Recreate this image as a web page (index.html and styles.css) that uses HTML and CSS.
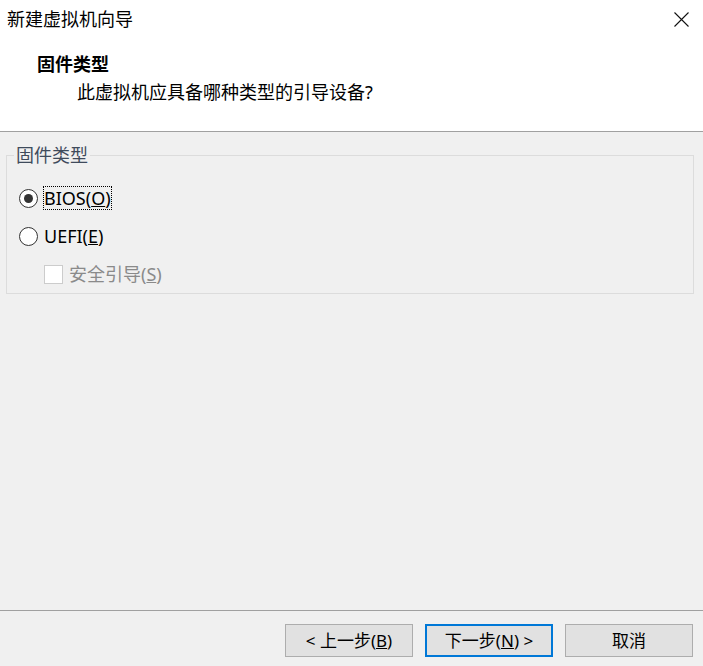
FILE: index.html
```html
<!DOCTYPE html>
<html lang="zh-CN">
<head>
<meta charset="utf-8">
<title>新建虚拟机向导</title>
<link rel="stylesheet" href="styles.css">
</head>
<body>
<div class="window">
  <div class="top">
    <div class="titlebar">
      <span class="title">新建虚拟机向导</span>
      <svg class="close" width="15" height="15" viewBox="0 0 15 15"><path d="M0.5 0.5 L14.5 14.5 M14.5 0.5 L0.5 14.5" stroke="#111" stroke-width="1.1" fill="none"/></svg>
    </div>
    <div class="heading">固件类型</div>
    <div class="subtitle">此虚拟机应具备哪种类型的引导设备?</div>
  </div>
  <div class="main">
    <fieldset class="group">
      <legend class="legend">固件类型</legend>
      <div class="row">
        <span class="radio checked"><span class="dot"></span></span>
        <span class="label focus">BIOS(<u>O</u>)</span>
      </div>
      <div class="row">
        <span class="radio"></span>
        <span class="label">UEFI(<u>E</u>)</span>
      </div>
      <div class="row sub">
        <span class="check"></span>
        <span class="label disabled">安全引导(<u>S</u>)</span>
      </div>
    </fieldset>
  </div>
  <div class="footer">
    <button class="btn">&lt; 上一步(<u>B</u>)</button>
    <button class="btn default">下一步(<u>N</u>) &gt;</button>
    <button class="btn">取消</button>
  </div>
</div>
</body>
</html>
```
FILE: styles.css
```css
html, body {
  margin: 0;
  padding: 0;
}
body {
  width: 703px;
  height: 666px;
  overflow: hidden;
  background: #f0f0f0;
  font-family: "Noto Sans", "Noto Sans CJK SC", sans-serif;
  font-size: 18px;
  color: #000;
}
.window {
  display: flex;
  flex-direction: column;
  height: 666px;
}
.top {
  height: 131px;
  background: #fff;
  border-bottom: 1px solid #a0a0a0;
}
.titlebar {
  height: 38px;
  display: flex;
  align-items: center;
  justify-content: space-between;
  padding: 0 14px 0 7px;
}
.title {
  line-height: 38px;
}
.close {
  display: block;
}
.heading {
  margin-top: 13px;
  padding-left: 37px;
  line-height: 26px;
  font-weight: bold;
}
.subtitle {
  margin-top: 2px;
  padding-left: 77px;
  line-height: 26px;
}
.main {
  flex: 1;
}
.group {
  margin: 11px 9px 0 6px;
  padding: 12px 0 0 0;
  border: 1px solid #dcdcdc;
  min-width: 0;
}
.legend {
  margin-left: 7px;
  padding: 0 2px;
  line-height: 24px;
  color: #3f4b5c;
}
.row {
  height: 38px;
  display: flex;
  align-items: center;
  padding-left: 12px;
}
.row.sub {
  padding-left: 37px;
}
.radio {
  width: 19px;
  height: 19px;
  box-sizing: border-box;
  border: 1.5px solid #333;
  border-radius: 50%;
  background: #fff;
  display: flex;
  align-items: center;
  justify-content: center;
}
.dot {
  width: 9px;
  height: 9px;
  border-radius: 50%;
  background: #333;
}
.label {
  margin-left: 5px;
  line-height: 22px;
  padding: 0;
  border: 1px solid transparent;
}
.label.focus {
  border: 1px dotted #000;
}
.check {
  width: 19px;
  height: 19px;
  box-sizing: border-box;
  border: 1px solid #cccccc;
  background: #fff;
}
.label.disabled {
  color: #8a8a8a;
}
.footer {
  height: 42px;
  border-top: 1px solid #a0a0a0;
  padding: 13px 10px 0 0;
  display: flex;
  justify-content: flex-end;
  align-items: flex-start;
  gap: 12px;
}
.btn {
  width: 128px;
  height: 33px;
  box-sizing: border-box;
  border: 1px solid #adadad;
  background: #e1e1e1;
  font-family: "Noto Sans", "Noto Sans CJK SC", sans-serif;
  font-size: 17px;
  color: #000;
  padding: 0;
  line-height: 31px;
}
.btn.default {
  border: 2px solid #0078d7;
  line-height: 29px;
}
```
